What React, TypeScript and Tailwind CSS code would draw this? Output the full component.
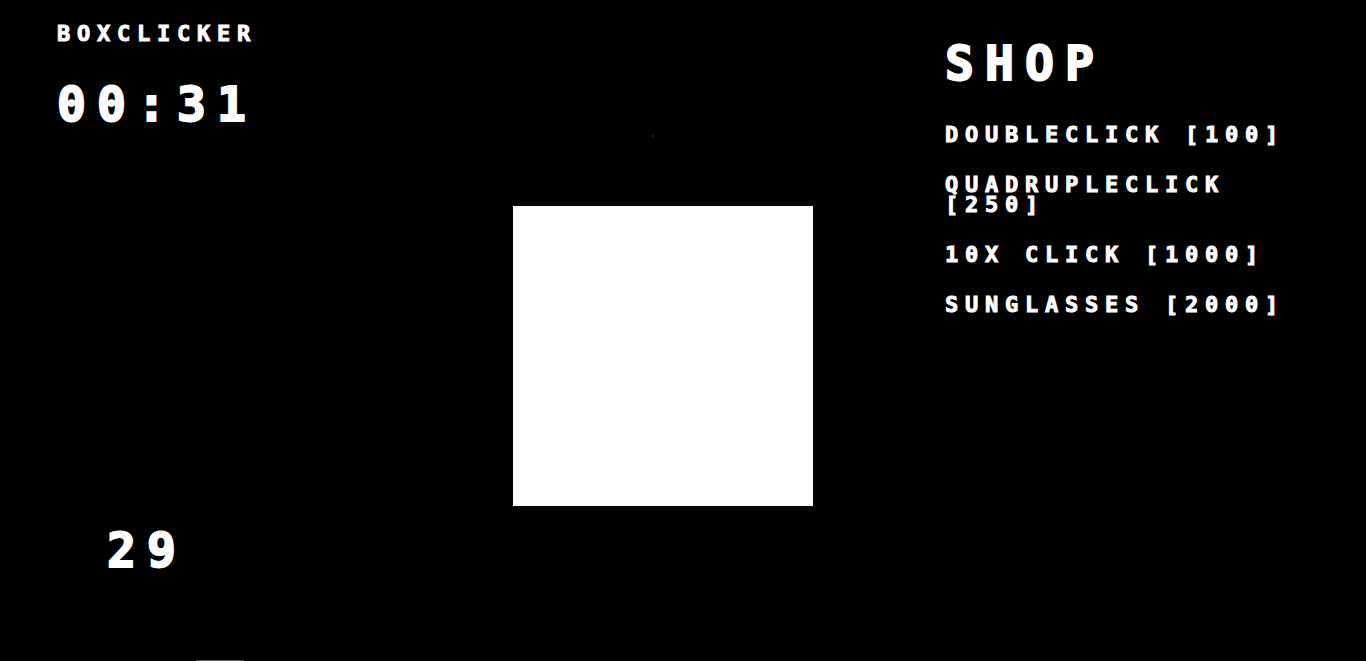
import React from 'react';

const pixel = "font-['DejaVu_Sans_Mono','Liberation_Mono',monospace] font-bold uppercase text-white";

const items = ['Doubleclick [100]', 'Quadrupleclick [250]', '10x Click [1000]', 'Sunglasses [2000]'];

export default function App(): JSX.Element {
	return (
		<div className="relative flex w-full h-[661px] overflow-hidden bg-black">
			<div className="flex flex-col w-[513px] pl-[57px]">
				<h1 className={`${pixel} mt-[23px] text-[22px] leading-[22px] tracking-[6.75px] [-webkit-text-stroke:1px_white]`}>
					Boxclicker
				</h1>
				<div className={`${pixel} mt-[35px] text-[48px] leading-[48px] tracking-[11.1px] [-webkit-text-stroke:2px_white]`}>
					00:31
				</div>
				<div className={`${pixel} mt-[398px] ml-[50px] text-[48px] leading-[48px] tracking-[11.1px] [-webkit-text-stroke:2px_white]`}>
					29
				</div>
				<div className="mt-[86px] ml-[139px] w-[48px] h-px bg-[#5a5a5a]" />
			</div>
			<div className="pt-[206px]">
				<button type="button" className="block w-[300px] h-[300px] bg-white outline-none" />
			</div>
			<div className="flex flex-col w-[360px] ml-[132px]">
				<h2 className={`${pixel} mt-[39px] text-[48px] leading-[48px] tracking-[11.1px] [-webkit-text-stroke:2px_white]`}>
					Shop
				</h2>
				<ul className="flex flex-col gap-[30px] mt-[38px]">
					{items.map((item) => (
						<li key={item} className="flex">
							<button
								type="button"
								className={`${pixel} block text-left text-[22px] leading-[20px] tracking-[6.75px] outline-none [-webkit-text-stroke:1px_white]`}
							>
								{item}
							</button>
						</li>
					))}
				</ul>
			</div>
			<div className="absolute left-[652px] top-[135px] w-[2px] h-[2px] rounded-full bg-[#1a1ad0]" />
		</div>
	);
}
